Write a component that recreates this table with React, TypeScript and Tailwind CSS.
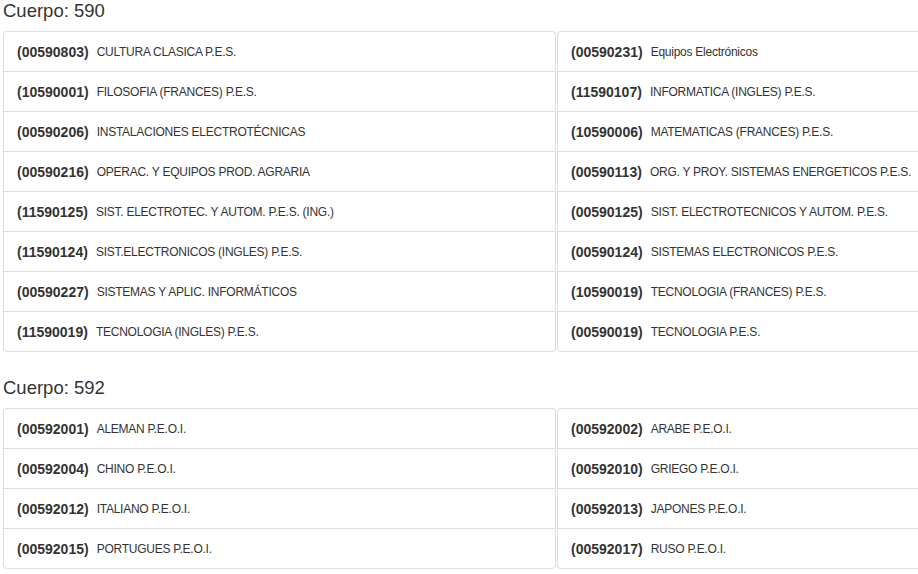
import React from "react";

type Item = [string, string];

const g590L: Item[] = [
  ["00590803", "CULTURA CLASICA P.E.S."],
  ["10590001", "FILOSOFIA (FRANCES) P.E.S."],
  ["00590206", "INSTALACIONES ELECTROTÉCNICAS"],
  ["00590216", "OPERAC. Y EQUIPOS PROD. AGRARIA"],
  ["11590125", "SIST. ELECTROTEC. Y AUTOM. P.E.S. (ING.)"],
  ["11590124", "SIST.ELECTRONICOS (INGLES) P.E.S."],
  ["00590227", "SISTEMAS Y APLIC. INFORMÁTICOS"],
  ["11590019", "TECNOLOGIA (INGLES) P.E.S."],
];
const g590R: Item[] = [
  ["00590231", "Equipos Electrónicos"],
  ["11590107", "INFORMATICA (INGLES) P.E.S."],
  ["10590006", "MATEMATICAS (FRANCES) P.E.S."],
  ["00590113", "ORG. Y PROY. SISTEMAS ENERGETICOS P.E.S."],
  ["00590125", "SIST. ELECTROTECNICOS Y AUTOM. P.E.S."],
  ["00590124", "SISTEMAS ELECTRONICOS P.E.S."],
  ["10590019", "TECNOLOGIA (FRANCES) P.E.S."],
  ["00590019", "TECNOLOGIA P.E.S."],
];
const g592L: Item[] = [
  ["00592001", "ALEMAN P.E.O.I."],
  ["00592004", "CHINO P.E.O.I."],
  ["00592012", "ITALIANO P.E.O.I."],
  ["00592015", "PORTUGUES P.E.O.I."],
];
const g592R: Item[] = [
  ["00592002", "ARABE P.E.O.I."],
  ["00592010", "GRIEGO P.E.O.I."],
  ["00592013", "JAPONES P.E.O.I."],
  ["00592017", "RUSO P.E.O.I."],
];

function List({ items }: { items: Item[] }) {
  return (
    <div className="w-[553px] shrink-0 border-t border-x border-[#dddddd] rounded-[4px] bg-white">
      {items.map(([code, label]) => (
        <div
          key={code}
          className="h-[40px] box-border border-b border-[#dddddd] flex items-center pt-[1px] pl-[13px] last:rounded-b-[4px]"
        >
          <span className="text-[14px] font-bold text-[#333333] leading-[20px] whitespace-nowrap">({code})</span>
          <span className="ml-[8px] text-[12px] tracking-[-0.25px] text-[#333333] leading-[20px] whitespace-nowrap">{label}</span>
        </div>
      ))}
    </div>
  );
}

function Section({ title, left, right, className }: { title: string; left: Item[]; right: Item[]; className?: string }) {
  return (
    <div className={className}>
      <h4 className="text-[18.5px] leading-[20px] font-medium text-[#333333] pl-[3px] mb-[10px]">{title}</h4>
      <div className="flex gap-px pl-[3px]">
        <List items={left} />
        <List items={right} />
      </div>
    </div>
  );
}

export default function App() {
  return (
    <div
      className="w-[918px] h-[574px] overflow-hidden bg-white pt-[1px]"
      style={{ fontFamily: '"Liberation Sans", Arial, Helvetica, sans-serif' }}
    >
      <Section title="Cuerpo: 590" left={g590L} right={g590R} />
      <Section title="Cuerpo: 592" left={g592L} right={g592R} className="mt-[26px]" />
    </div>
  );
}
